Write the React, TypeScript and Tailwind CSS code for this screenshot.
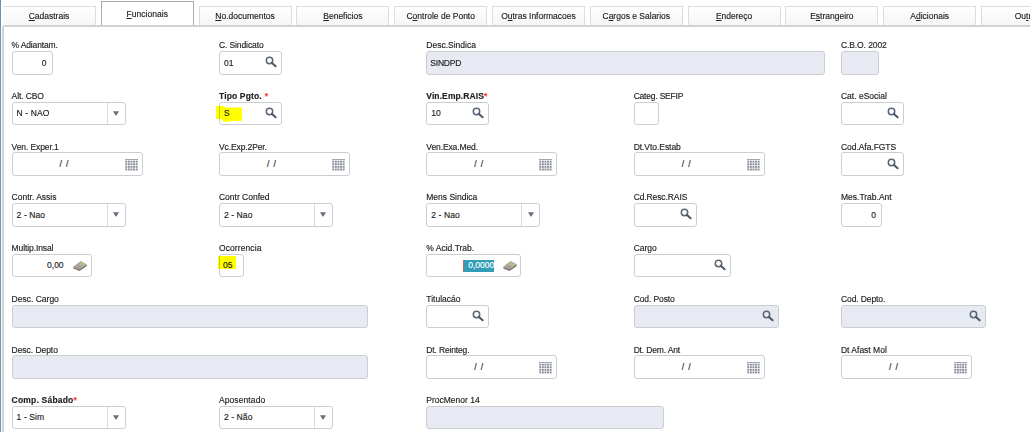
import type { ReactNode } from 'react';
import clsx from 'clsx';

const TABS: [string, string, string][] = [
  ['', 'C', 'adastrais'],
  ['', 'F', 'uncionais'],
  ['', 'N', 'o.documentos'],
  ['', 'B', 'eneficios'],
  ['C', 'o', 'ntrole de Ponto'],
  ['O', 'u', 'tras Informacoes'],
  ['C', 'a', 'rgos e Salarios'],
  ['', 'E', 'ndereço'],
  ['E', 's', 'trangeiro'],
  ['A', 'd', 'icionais'],
  ['Ou', 't', 'ros'],
];

const SearchIcon = () => (
  <svg className="h-3 w-3 shrink-0" viewBox="0 0 12 12" fill="none">
    <circle cx="4.5" cy="4.5" r="3.2" stroke="#5a6676" strokeWidth="1.5" />
    <path d="M7 6.9 10.6 10.3" stroke="#4b5768" strokeWidth="2" strokeLinecap="round" />
  </svg>
);

const CalendarIcon = () => (
  <svg className="h-3 w-[13px] shrink-0" viewBox="0 0 13 12" fill="#858b97">
    <rect width="13" height="1" fill="#a2a6ae" />
    {[1.7, 4.3, 6.9, 9.5].map((y) =>
      [0.3, 2.9, 5.5, 8.1, 10.7].map((x) => (
        <rect key={`${x}-${y}`} x={x} y={y} width="1.9" height="1.9" />
      ))
    )}
  </svg>
);

const CalculatorIcon = () => (
  <svg className="h-3 w-3.5 shrink-0" viewBox="0 0 14 12">
    <path d="M0.3 7 7.6 1.3 13.7 4.6 13.5 6.2 6.5 10.9 0.4 8.4Z" fill="#7b7069" />
    <path d="M0.3 7 7.6 1.3 13.7 4.6 6.5 9.4Z" fill="#b5ada4" />
    <path d="M5.9 3.5 8 1.9 12.2 4.3 10 5.8Z" fill="#a6c882" />
    <path d="M2.6 6.6 7 8.4M4 5.5 8.4 7.3" stroke="#958b82" strokeWidth=".8" />
  </svg>
);

interface FieldProps {
  label: string;
  width: string;
  tracking?: string;
  span?: string;
  required?: boolean;
  gap?: boolean;
  disabled?: boolean;
  children?: ReactNode;
}

const Field = ({ label, width, tracking, span, required, gap, disabled, children }: FieldProps) => (
  <div className={span}>
    <div className={clsx('h-[10.7px] whitespace-nowrap leading-[11.5px]', tracking, required && 'font-bold')}>
      {label}
      {required && <span className={clsx('text-[#f33]', gap && 'ml-[3px]')}>*</span>}
    </div>
    <div
      className={clsx(
        'relative flex h-[23.6px] items-center rounded-[3px] border border-[#caced1]',
        width,
        disabled ? 'bg-[#e7eaf2]' : 'bg-white'
      )}
    >
      {children}
    </div>
  </div>
);

const Lookup = ({ value }: { value?: string }) => (
  <>
    <span className="ml-[4px] flex-1">{value}</span>
    <span className="mr-[4px] -mt-px">
      <SearchIcon />
    </span>
  </>
);

const SelectBody = ({ value }: { value: string }) => (
  <>
    <span className="ml-[4px] flex-1 tracking-[0.1px]">{value}</span>
    <span className="flex h-full w-[18px] items-center justify-center border-l border-[#d9dcdd]">
      <svg className="h-[5px] w-[6px]" viewBox="0 0 6 5">
        <path d="M0 .3H6L3.4 4.5H2.6Z" fill="#68707d" />
      </svg>
    </span>
  </>
);

const DateBody = () => (
  <>
    <span className="ml-[47px] flex-1 whitespace-pre tracking-[0.9px]">/ /</span>
    <span className="mr-[4px] mt-px">
      <CalendarIcon />
    </span>
  </>
);

export default function App() {
  return (
    <div className="flex h-[432px] w-[1030px] overflow-hidden bg-white font-['Liberation_Sans',Arial,sans-serif] text-[8.5px] text-[#222] [-webkit-text-stroke:0.15px]">
      <div className="w-px shrink-0 bg-[#5c9db3]" />
      <div className="flex min-w-0 flex-1 flex-col">
        {/* tab strip */}
        <div className="flex h-[25px] shrink-0 items-end gap-[4.8px] pl-[2px]">
          {TABS.map(([before, key, after], i) => (
            <div
              key={i}
              className={clsx(
                'flex w-[93px] shrink-0 items-center justify-center whitespace-nowrap border border-b-0',
                i === 1
                  ? 'h-6 border-[#aaa] bg-white pt-px tracking-[0.05px]'
                  : 'h-[19px] border-[#ddd] bg-linear-to-b from-white to-[#f5f5f5] pt-px',
                i === 0 && 'border-l-0'
              )}
            >
              <span>
                {before}
                <span className="underline decoration-1 underline-offset-1">{key}</span>
                {after}
              </span>
            </div>
          ))}
        </div>

        <div className="mx-px mr-0 flex-1 rounded-tl-[3px] border-l-2 border-t-2 border-[#d2d2d2]">
          <div className="grid auto-rows-[50.7px] grid-cols-[repeat(5,207.35px)] pl-[7.6px] pt-[13.4px]">
            <Field label="% Adiantam." tracking="tracking-[-0.15px]" width="w-[41px]">
              <span className="flex-1 pr-[5px] text-right">0</span>
            </Field>
            <Field label="C. Sindicato" tracking="tracking-[-0.1px]" width="w-[63px]">
              <Lookup value="01" />
            </Field>
            <Field label="Desc.Sindica" width="w-[399px]" span="col-span-2" disabled>
              <span className="ml-[3px] tracking-[-0.2px]">SINDPD</span>
            </Field>
            <Field label="C.B.O. 2002" tracking="tracking-[-0.1px]" width="w-[38px]" disabled />

            <Field label="Alt. CBO" tracking="tracking-[-0.1px]" width="w-[114px]">
              <SelectBody value="N - NAO" />
            </Field>
            <Field label="Tipo Pgto." tracking="tracking-[0.15px]" width="w-[63px]" required gap>
              <Lookup value="S" />
              <svg className="absolute -left-[4px] top-[3px] h-4 w-[26px] mix-blend-multiply" viewBox="0 0 26 16">
                <path d="M0 0H7L10 1.5H26V15H17L8 16 5 13H0Z" fill="#ffff00" />
              </svg>
            </Field>
            <Field label="Vin.Emp.RAIS" tracking="tracking-[0.1px]" width="w-[63px]" required>
              <Lookup value="10" />
            </Field>
            <Field label="Categ. SEFIP" tracking="tracking-[-0.2px]" width="w-[25px]" />
            <Field label="Cat. eSocial" tracking="tracking-[0px]" width="w-[63px]">
              <Lookup />
            </Field>

            <Field label="Ven. Exper.1" tracking="tracking-[-0.1px]" width="w-[131px]">
              <DateBody />
            </Field>
            <Field label="Vc.Exp.2Per." tracking="tracking-[-0.1px]" width="w-[131px]">
              <DateBody />
            </Field>
            <Field label="Ven.Exa.Med." tracking="tracking-[-0.1px]" width="w-[131px]">
              <DateBody />
            </Field>
            <Field label="Dt.Vto.Estab" tracking="tracking-[-0.05px]" width="w-[131px]">
              <DateBody />
            </Field>
            <Field label="Cod.Afa.FGTS" tracking="tracking-[-0.05px]" width="w-[63px]">
              <Lookup />
            </Field>

            <Field label="Contr. Assis" width="w-[114px]">
              <SelectBody value="2 - Nao" />
            </Field>
            <Field label="Contr Confed" width="w-[114px]">
              <SelectBody value="2 - Nao" />
            </Field>
            <Field label="Mens Sindica" width="w-[114px]">
              <SelectBody value="2 - Nao" />
            </Field>
            <Field label="Cd.Resc.RAIS" tracking="tracking-[-0.1px]" width="w-[63px]">
              <Lookup />
            </Field>
            <Field label="Mes.Trab.Ant" width="w-[41px]">
              <span className="flex-1 pr-[5px] text-right">0</span>
            </Field>

            <Field label="Multip.Insal" tracking="tracking-[-0.1px]" width="w-[80px]">
              <span className="flex-1 pr-[9px] text-right">0,00</span>
              <span className="mr-[4px]">
                <CalculatorIcon />
              </span>
            </Field>
            <Field label="Ocorrencia" tracking="tracking-[0.1px]" width="w-[25px]">
              <span className="ml-[3px]">05</span>
              <div className="absolute -left-[2px] top-[1px] h-[13px] w-[18px] bg-[#ffff00] mix-blend-multiply" />
            </Field>
            <Field label="% Acid.Trab." width="w-[95px]">
              <span className="ml-[36px] flex h-[12px] w-[31px] items-center justify-end border-l border-[#c46a50] bg-[#319db8] text-white">
                0,0000
              </span>
              <span className="ml-auto mr-[3px]">
                <CalculatorIcon />
              </span>
            </Field>
            <Field label="Cargo" span="col-span-2" width="w-[97px]">
              <Lookup />
            </Field>

            <Field label="Desc. Cargo" span="col-span-2" width="w-[356px]" disabled />
            <Field label="Titulacáo" width="w-[63px]">
              <Lookup />
            </Field>
            <Field label="Cod. Posto" tracking="tracking-[-0.1px]" width="w-[145px]" disabled>
              <Lookup />
            </Field>
            <Field label="Cod. Depto." tracking="tracking-[-0.1px]" width="w-[145px]" disabled>
              <Lookup />
            </Field>

            <Field label="Desc. Depto" tracking="tracking-[-0.05px]" span="col-span-2" width="w-[356px]" disabled />
            <Field label="Dt. Reinteg." tracking="tracking-[-0.15px]" width="w-[131px]">
              <DateBody />
            </Field>
            <Field label="Dt. Dem. Ant" tracking="tracking-[-0.15px]" width="w-[131px]">
              <DateBody />
            </Field>
            <Field label="Dt Afast Mol" width="w-[131px]">
              <DateBody />
            </Field>

            <Field label="Comp. Sábado" tracking="tracking-[0.2px]" width="w-[114px]" required>
              <SelectBody value="1 - Sim" />
            </Field>
            <Field label="Aposentado" tracking="tracking-[0.1px]" width="w-[114px]">
              <SelectBody value="2 - Não" />
            </Field>
            <Field label="ProcMenor 14" span="col-span-2" width="w-[238px]" disabled />
          </div>
        </div>
      </div>
    </div>
  );
}
